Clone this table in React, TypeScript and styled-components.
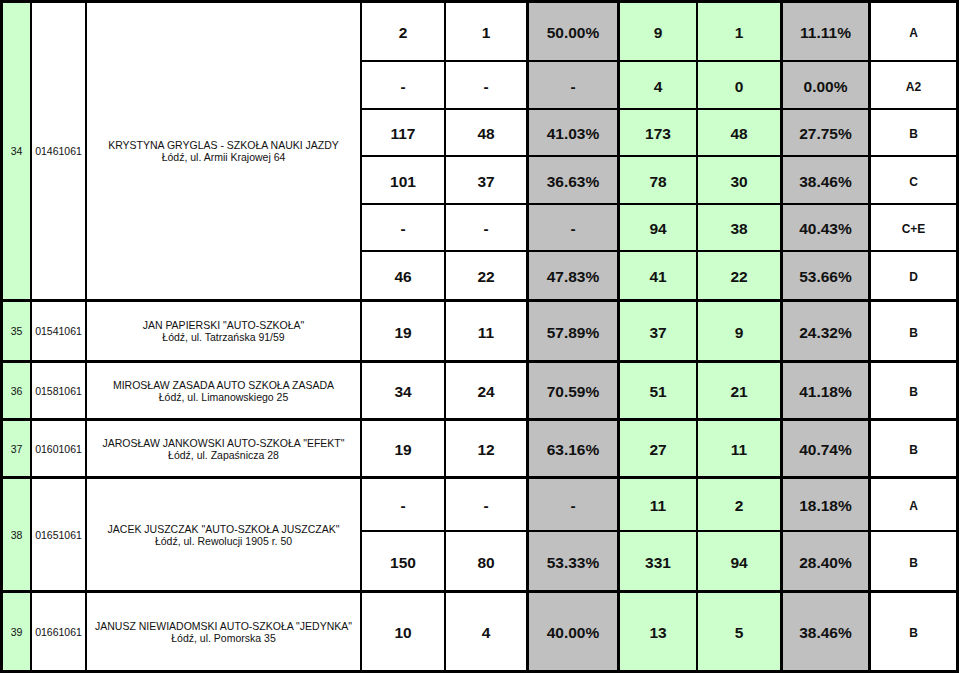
import React from 'react';
import styled, { createGlobalStyle } from 'styled-components';

type Tone = 'white' | 'green' | 'gray';

interface CategoryRow {
  values: string[];
  category: string;
}

interface School {
  lp: string;
  code: string;
  name: string;
  address: string;
  rows: CategoryRow[];
}

const schools: School[] = [
  {
    lp: '34',
    code: '01461061',
    name: 'KRYSTYNA GRYGLAS - SZKOŁA NAUKI JAZDY',
    address: 'Łódź, ul. Armii Krajowej 64',
    rows: [
      { values: ['2', '1', '50.00%', '9', '1', '11.11%'], category: 'A' },
      { values: ['-', '-', '-', '4', '0', '0.00%'], category: 'A2' },
      { values: ['117', '48', '41.03%', '173', '48', '27.75%'], category: 'B' },
      { values: ['101', '37', '36.63%', '78', '30', '38.46%'], category: 'C' },
      { values: ['-', '-', '-', '94', '38', '40.43%'], category: 'C+E' },
      { values: ['46', '22', '47.83%', '41', '22', '53.66%'], category: 'D' },
    ],
  },
  {
    lp: '35',
    code: '01541061',
    name: 'JAN PAPIERSKI "AUTO-SZKOŁA"',
    address: 'Łódź, ul. Tatrzańska 91/59',
    rows: [{ values: ['19', '11', '57.89%', '37', '9', '24.32%'], category: 'B' }],
  },
  {
    lp: '36',
    code: '01581061',
    name: 'MIROSŁAW ZASADA AUTO SZKOŁA ZASADA',
    address: 'Łódź, ul. Limanowskiego 25',
    rows: [{ values: ['34', '24', '70.59%', '51', '21', '41.18%'], category: 'B' }],
  },
  {
    lp: '37',
    code: '01601061',
    name: 'JAROSŁAW JANKOWSKI AUTO-SZKOŁA "EFEKT"',
    address: 'Łódź, ul. Zapaśnicza 28',
    rows: [{ values: ['19', '12', '63.16%', '27', '11', '40.74%'], category: 'B' }],
  },
  {
    lp: '38',
    code: '01651061',
    name: 'JACEK JUSZCZAK "AUTO-SZKOŁA JUSZCZAK"',
    address: 'Łódź, ul. Rewolucji 1905 r. 50',
    rows: [
      { values: ['-', '-', '-', '11', '2', '18.18%'], category: 'A' },
      { values: ['150', '80', '53.33%', '331', '94', '28.40%'], category: 'B' },
    ],
  },
  {
    lp: '39',
    code: '01661061',
    name: 'JANUSZ NIEWIADOMSKI AUTO-SZKOŁA "JEDYNKA"',
    address: 'Łódź, ul. Pomorska 35',
    rows: [{ values: ['10', '4', '40.00%', '13', '5', '38.46%'], category: 'B' }],
  },
];

// border-box widths of the 10 columns, and the right rule of each
const colWidths = [29, 55, 275, 84, 83, 91, 78, 85, 88, 88];
const colRules = [2, 2, 2, 2, 3, 3, 2, 3, 3, 3];
const valueTones: Tone[] = ['white', 'white', 'gray', 'green', 'green', 'gray'];
const rowHeights = [59, 48, 47, 48, 47, 50, 61, 58, 58, 53, 61, 80];

const GlobalStyle = createGlobalStyle`
  html, body {
    margin: 0;
    padding: 0;
    background: #ffffff;
  }
`;

const Sheet = styled.div`
  display: grid;
  grid-template-columns: ${colWidths.map((w) => `${w}px`).join(' ')};
  grid-template-rows: ${rowHeights.map((h) => `${h}px`).join(' ')};
  width: max-content;
  border-top: 3px solid #000;
  border-left: 3px solid #000;
  font-family: 'Liberation Sans', Arial, sans-serif;
  color: #111;
`;

const toneColor: Record<Tone, string> = {
  white: '#ffffff',
  green: '#ccffcc',
  gray: '#c0c0c0',
};

const Cell = styled.div<{ $tone: Tone; $right: number; $bottom: number; $span?: number }>`
  box-sizing: border-box;
  display: flex;
  flex-direction: column;
  align-items: center;
  justify-content: center;
  text-align: center;
  background: ${(p) => toneColor[p.$tone]};
  border-right: ${(p) => p.$right}px solid #000;
  border-bottom: ${(p) => p.$bottom}px solid #000;
  grid-row: span ${(p) => p.$span ?? 1};
  overflow: hidden;
`;

const Info = styled.span`
  font-size: 10.5px;
  line-height: 12px;
  white-space: nowrap;
`;

const Figure = styled.span`
  font-size: 15.5px;
  font-weight: 700;
  padding-top: 3px;
`;

const Category = styled.span`
  font-size: 12px;
  font-weight: 700;
  padding-top: 3px;
`;

function SchoolBlock({ school }: { school: School }) {
  const span = school.rows.length;
  return (
    <>
      <Cell $tone="green" $right={colRules[0]} $bottom={3} $span={span}>
        <Info>{school.lp}</Info>
      </Cell>
      <Cell $tone="white" $right={colRules[1]} $bottom={3} $span={span}>
        <Info>{school.code}</Info>
      </Cell>
      <Cell $tone="white" $right={colRules[2]} $bottom={3} $span={span}>
        <Info>{school.name}</Info>
        <Info>{school.address}</Info>
      </Cell>
      {school.rows.map((row, r) => {
        const bottom = r === span - 1 ? 3 : 2;
        return (
          <React.Fragment key={row.category}>
            {row.values.map((v, i) => (
              <Cell key={i} $tone={valueTones[i]} $right={colRules[i + 3]} $bottom={bottom}>
                <Figure>{v}</Figure>
              </Cell>
            ))}
            <Cell $tone="white" $right={colRules[9]} $bottom={bottom}>
              <Category>{row.category}</Category>
            </Cell>
          </React.Fragment>
        );
      })}
    </>
  );
}

export default function App() {
  return (
    <>
      <GlobalStyle />
      <Sheet>
        {schools.map((s) => (
          <SchoolBlock key={s.lp} school={s} />
        ))}
      </Sheet>
    </>
  );
}
